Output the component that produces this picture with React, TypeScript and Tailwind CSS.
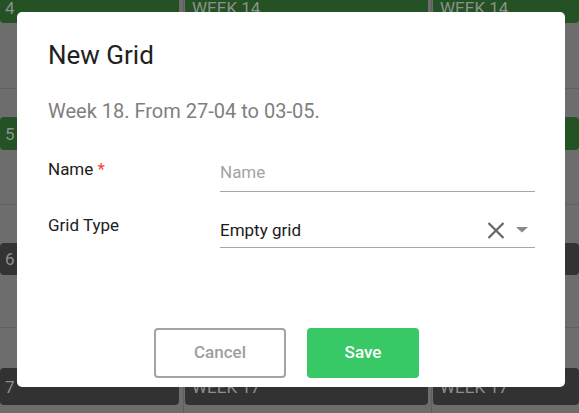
import React from "react";

type Row = {
  label: string;
  week: string;
  color: string;
  headerH: string;
  bodyH: string;
  lineAt: string;
};

const rows: Row[] = [
  { label: "4", week: "WEEK 14", color: "bg-[#245224]", headerH: "h-[30px]", bodyH: "h-[94px]", lineAt: "h-[66px]" },
  { label: "5", week: "WEEK 15", color: "bg-[#245224]", headerH: "h-[33px]", bodyH: "h-[93px]", lineAt: "h-[55px]" },
  { label: "6", week: "WEEK 16", color: "bg-[#333333]", headerH: "h-[32px]", bodyH: "h-[93px]", lineAt: "h-[53px]" },
  { label: "7", week: "WEEK 17", color: "bg-[#323232]", headerH: "h-[37px]", bodyH: "h-[40px]", lineAt: "h-[60px]" },
];

const cols = [
  { w: "w-[184px]", inner: "mr-[4px]", border: "border-r" },
  { w: "w-[248px]", inner: "ml-[1px] mr-[3px]", border: "border-r" },
  { w: "flex-1", inner: "ml-[1px]", border: "" },
];

function CalendarBackground() {
  return (
    <div className="flex flex-col -mt-[7px] bg-[#6d6d6d]">
      {rows.map((row) => (
        <div key={row.label} className="flex">
          {cols.map((col, ci) => (
            <div key={ci} className={`${col.w} ${col.border} border-[#5f5f5f] flex flex-col`}>
              <div
                className={`${row.headerH} ${row.color} ${col.inner} rounded-[4px] flex items-center px-[5px] text-[17px] leading-[20px] text-[#8b918b]`}
              >
                {ci === 0 ? row.label : <span className="pl-[2px]">{row.week}</span>}
              </div>
              <div className={`${row.bodyH} flex flex-col`}>
                <div className={`${row.lineAt} shrink-0 border-b border-[#5f5f5f]`} />
              </div>
            </div>
          ))}
        </div>
      ))}
    </div>
  );
}

function ClearIcon() {
  return (
    <svg width="18" height="17" viewBox="0 0 18 17" className="block">
      <path d="M1.5 1 L16.5 16 M16.5 1 L1.5 16" stroke="#666666" strokeWidth="2.2" fill="none" />
    </svg>
  );
}

function CaretIcon() {
  return (
    <svg width="12" height="6" viewBox="0 0 12 6" className="block">
      <path d="M0 0 L12 0 L6 5.5 Z" fill="#8a8a8a" />
    </svg>
  );
}

function NewGridDialog() {
  return (
    <div className="absolute left-[17px] top-[12px] w-[548px] h-[375px] bg-white rounded-[5px] pl-[31px] pr-[30px] pt-[27px]">
      <h2 className="text-[26px] leading-[32px] text-[#212121]">New Grid</h2>
      <p className="mt-[28px] text-[20px] leading-[24px] text-[#7f7f7f]">Week 18. From 27-04 to 03-05.</p>

      <div className="mt-[34px] flex items-start">
        <div className="w-[172px] text-[17px] leading-[24px] text-[#212121]">
          Name <span className="text-[#f44336]">*</span>
        </div>
        <div className="flex-1 pt-[3px] pb-[7px] border-b border-[#a6a6a6] text-[17px] leading-[24px] text-[#a3a3a3]">
          Name
        </div>
      </div>

      <div className="mt-[21px] flex items-start">
        <div className="w-[172px] text-[17px] leading-[24px] text-[#212121]">Grid Type</div>
        <div className="flex-1 flex items-center pt-[5px] pb-[5px] border-b border-[#a6a6a6]">
          <span className="flex-1 text-[17px] leading-[24px] text-[#1a1a1a]">Empty grid</span>
          <ClearIcon />
          <span className="ml-[11px] mr-[7px]">
            <CaretIcon />
          </span>
        </div>
      </div>

      <div className="mt-[80px] flex gap-[21px] pl-[106px]">
        <button className="w-[132px] h-[50px] rounded-[4px] border-2 border-[#a3a3a3] bg-white text-[17px] font-medium text-[#9e9e9e]">
          Cancel
        </button>
        <button className="w-[112px] h-[50px] rounded-[4px] bg-[#38c866] text-[17px] font-medium text-white">
          Save
        </button>
      </div>
    </div>
  );
}

export default function App() {
  return (
    <div className="relative w-[579px] h-[413px] overflow-hidden bg-[#666666] font-['Roboto',sans-serif]">
      <CalendarBackground />
      <NewGridDialog />
    </div>
  );
}
